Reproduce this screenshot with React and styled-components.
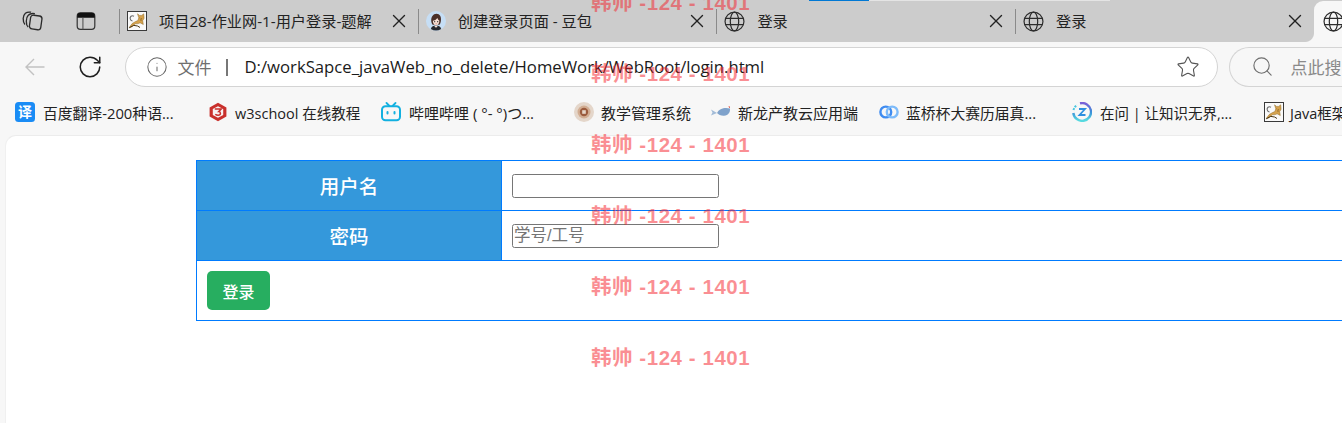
import React from "react";
import styled, { createGlobalStyle } from "styled-components";
import { RotateCw, Info, Star, Search, X } from "lucide-react";

const UI_FONT = `"Open Sans", "Noto Sans CJK SC", sans-serif`;

const Global = createGlobalStyle`
  html, body { margin: 0; padding: 0; background: #f7f7f7; }
  * { box-sizing: border-box; }
`;

const Root = styled.div`
  position: relative; width: 1342px; height: 423px; overflow: hidden;
  display: flex; flex-direction: column; background: #f7f7f7;
  font-family: ${UI_FONT}; color: #1f1f1f;
`;

const TabStrip = styled.div`
  position: relative; display: flex; height: 42px; flex: none; background: #cccccc;
`;
const StripTools = styled.div`
  width: 119px; flex: none; display: flex; align-items: center; padding-left: 21px; gap: 32px;
`;
const Tab = styled.div`
  position: relative; width: 298.7px; flex: none; display: flex; align-items: center;
  padding: 0 8px 0 8px; font-size: 15.2px;
  &::before {
    content: ""; position: absolute; left: 0; top: 9px; width: 1px; height: 25px; background: #8a8a8a;
  }
`;
const TabTitle = styled.span`
  flex: 1; margin-left: 12px; padding-bottom: 3px; white-space: nowrap; overflow: hidden; color: #222;
`;
const ActiveTab = styled.div`
  position: relative; flex: 1; display: flex; align-items: center; padding-left: 9px;
  background: #f7f7f7; border-radius: 9px 0 0 0; margin-top: 1px;
  &::before {
    content: ""; position: absolute; left: -9px; bottom: 0; width: 9px; height: 9px;
    background: radial-gradient(circle at 0 0, #cccccc 8.5px, #f7f7f7 9.5px);
  }
`;
const LoadBar = styled.div`
  position: absolute; left: 809px; top: 0; width: 301px; height: 1px; background: #e4e4e4;
  &::before { content: ""; display: block; width: 60px; height: 1px; background: #0078d4; }
`;

const Toolbar = styled.div`
  height: 46px; flex: none; display: flex; align-items: center; background: #f7f7f7; padding: 3px 0 0 25px;
`;
const NavBack = styled.div`
  width: 52px; display: flex; flex: none;
`;
const NavReload = styled.div`
  width: 48px; display: flex; flex: none; color: #1f1f1f;
`;
const AddressBar = styled.div`
  width: 1093px; height: 40px; flex: none; display: flex; align-items: center; background: #fff;
  border: 1.5px solid #d4d4d4; border-radius: 20px; padding: 0 17px 0 19.5px;
`;
const Scheme = styled.span`
  margin-left: 10px; font-size: 17px; color: #6f6f6f; width: 50px; flex: none; position: relative;
  &::after {
    content: ""; position: absolute; right: 0; top: 5px; width: 1.5px; height: 17px; background: #777;
  }
`;
const Url = styled.span`
  flex: 1; margin-left: 17px; font-size: 16.7px; color: #1a1a1a; white-space: nowrap;
`;
const SearchBox = styled.div`
  width: 140px; height: 40px; flex: none; margin-left: 11px; display: flex; align-items: center; background: #f7f7f7;
  border: 1.5px solid #d4d4d4; border-right: none; border-radius: 20px 0 0 20px; padding-left: 20.5px;
  color: #6f6f6f;
`;
const SearchHint = styled.span`
  margin-left: 17px; font-size: 17px; color: #8a8a8a; white-space: nowrap;
`;

const Bookmarks = styled.div`
  height: 47px; flex: none; display: flex; align-items: center; background: #f7f7f7; padding-left: 15px;
`;
const Bookmark = styled.div`
  width: ${p => p.$w}px; flex: none; display: flex; align-items: center; white-space: nowrap; color: #222;
`;
const BookmarkLabel = styled.span`
  margin-left: ${p => p.$gap ?? 8}px; padding-top: 1px;
  font-size: ${p => p.$size || 15}px;
`;

const Page = styled.main`
  flex: 1; margin-left: 5px; background: #fff; border-radius: 11px 0 0 0;
  border-top: 1px solid #ececec; border-left: 1px solid #f0f0f0; padding: 24px 0 0 190px;
`;
const LoginTable = styled.table`
  width: 1400px; table-layout: fixed; border-collapse: collapse;
  font-family: "Liberation Sans", "Noto Sans CJK SC", sans-serif;
  td, th { border: 1px solid #007bff; padding: 0; }
`;
const Row = styled.tr`
  height: ${p => p.$h}px;
`;
const LabelCell = styled.th`
  width: 305px; background: #3498db; color: #fff; font-size: 19.5px; font-weight: 500; text-align: center;
`;
const FieldCell = styled.td`
  padding-left: 10px !important; background: #fff;
`;
const Field = styled.input`
  display: block; width: 207px; height: 24px; border: 1px solid #767676; border-radius: 2.5px; padding: 1px;
  font-size: 16.5px; font-family: inherit; background: #fff;
  &::placeholder { color: #757575; opacity: 1; }
`;
const ActionCell = styled.td`
  padding-left: 10px !important;
`;
const LoginButton = styled.button`
  display: block; width: 63px; height: 39px; border: none; border-radius: 5px; background: #27ae60; color: #fff;
  font-size: 16px; font-weight: 500; font-family: inherit; padding: 0;
`;

const WatermarkLayer = styled.div`
  position: absolute; left: 591px; top: -9px; display: flex; flex-direction: column; gap: 47px; pointer-events: none;
`;
const Watermark = styled.div`
  height: 24px; line-height: 24px; white-space: nowrap; font-family: "Liberation Sans", "Noto Sans CJK SC", sans-serif;
  font-size: 20.5px; font-weight: 700; letter-spacing: .55px; color: rgba(245, 30, 40, .5);
`;

const Svg = ({ s = 20, children, ...r }) => (
  <svg width={s} height={s} viewBox="0 0 20 20" fill="none" style={{ flex: "none", display: "block" }} {...r}>{children}</svg>
);

const WorkspaceIcon = () => (
  <Svg s={22} stroke="#2a2a2a" strokeWidth="1.2">
    <rect x="8.2" y="5" width="10.4" height="12.6" rx="2.6" transform="rotate(8 13 11)" />
    <path d="M6.5 15.5C4.2 13.5 4.3 7 6.6 4.8c1.3-1.3 4-1.8 6-1.4" />
    <path d="M3.6 13.2C1.2 10.4 1.6 5 4 3c1.2-1 3.4-1.3 5.2-1" />
  </Svg>
);
const VerticalTabsIcon = () => (
  <Svg s={22}>
    <rect x="2" y="2.600" width="16" height="15" rx="3" stroke="#333" strokeWidth="1.1" />
    <path d="M2 5.600a3 3 0 0 1 3-3h10a3 3 0 0 1 3 3V7H2z" fill="#111" />
    <path d="M7.200 7v10.500" stroke="#555" strokeWidth="1" />
  </Svg>
);
const Tomcat = () => (
  <Svg s={20}>
    <rect x=".5" y=".5" width="19" height="19" fill="#fafafa" stroke="#3a3a3a" />
    <path d="M5.500 10C3 9.500 2.400 6.500 4 5.200c.9-.7 2-.6 3 .1" stroke="#6a6a6a" strokeWidth="1.100" />
    <path d="M10.500 2.800l2 1.600h2.200l2-1.600.4 4.400-1.400 2.500.6 3.800-3.200-1.700-1.800.8-2.900.2-4.200 3.300-1.800.2 2.800-3.800 3.400-2 2.300-1 .9-2.700z" fill="#d6a24c" stroke="#8e6a26" strokeWidth=".5" />
    <path d="M2.200 16.800l4.600-2.400 3.800.6 2.400 1.500" stroke="#4a3512" strokeWidth="1" />
    <path d="M12.700 7l.6.600M15.100 7l-.6.600M13.300 9h1.400" stroke="#5a3d10" strokeWidth=".7" />
  </Svg>
);
const Doubao = () => (
  <Svg s={20}>
    <circle cx="10" cy="10" r="10" fill="#c6def5" />
    <path d="M4.800 18c.8-2.600 2.600-3.400 5.200-3.400s4.400.8 5.200 3.400A10 10 0 0 1 4.800 18z" fill="#26262c" />
    <path d="M5.300 10.500C4.800 6 7.200 2.800 10.500 2.800c3.300 0 5 3 4.400 7.200-.3 2-.9 3.200-1.500 3.800H6.700c-.6-.7-1.200-1.700-1.400-3.300z" fill="#4a2f28" />
    <path d="M6.800 9.800c1.800-.2 3.600-1.200 4.500-2.800.6 1.300 1.300 2.200 2.100 2.800-.1 2.600-1.400 4.600-3.300 4.600s-3.200-2-3.300-4.600z" fill="#f9e1d6" />
    <path d="M8.700 15h2.600v1l-1.300.6-1.300-.6z" fill="#f9e1d6" />
    <circle cx="8.700" cy="10.700" r=".6" fill="#222" /><circle cx="11.700" cy="10.700" r=".6" fill="#222" />
    <path d="M9.500 12.800h1.400" stroke="#c5605a" strokeWidth=".6" />
  </Svg>
);
const Globe = () => (
  <Svg s={21} stroke="#2c2c2c" strokeWidth="1.15">
    <circle cx="10" cy="10" r="9" />
    <ellipse cx="10" cy="10" rx="4" ry="9" />
    <path d="M1.700 7h16.600M1.700 13h16.600" />
  </Svg>
);
const Close = () => <X size={22} strokeWidth={1.5} color="#222" style={{ flex: "none", marginBottom: 1 }} />;
const BackArrow = () => (
  <Svg s={20} stroke="#c2c2c2" strokeWidth="1.4">
    <path d="M19.500 10H1M9 2l-8 8 8 8" />
  </Svg>
);

const FanyiIcon = () => (
  <Svg s={20}>
    <rect width="20" height="20" rx="3.500" fill="#1a8cf5" />
    <text x="10" y="15" textAnchor="middle" fontSize="14" fontWeight="700" fill="#fff" fontFamily="Noto Sans CJK SC">译</text>
  </Svg>
);
const W3Icon = () => (
  <Svg s={20}>
    <path d="M10 .8l8.400 4.600v9.200L10 19.200l-8.400-4.600V5.400z" fill="#c9302c" />
    <path d="M10 4.300l5.200 2.700v6L10 15.700 4.800 13V7z" fill="#f8f2f2" />
    <path d="M6.800 7h6.400l-2.600 2.600c2.400.3 2.700 3.600-.5 3.700-1.100 0-2-.3-2.800-1" stroke="#c9302c" strokeWidth="1.500" />
  </Svg>
);
const BiliIcon = () => (
  <Svg s={20}>
    <rect x="1" y="4.200" width="18" height="14" rx="3.500" stroke="#12b0e0" strokeWidth="2" />
    <path d="M5.500 1l3 3M14.500 1l-3 3" stroke="#12b0e0" strokeWidth="1.800" strokeLinecap="round" />
    <path d="M6.500 10v1.600M13.500 10v1.600" stroke="#12b0e0" strokeWidth="2" strokeLinecap="round" />
  </Svg>
);
const SchoolIcon = () => (
  <Svg s={20}>
    <circle cx="10" cy="10" r="10" fill="#e4d6ca" />
    <circle cx="10" cy="10" r="6.500" fill="#d2ad92" />
    <circle cx="10" cy="10" r="4.200" fill="#9c5c3e" />
    <rect x="8.200" y="8.200" width="3.600" height="3.600" fill="#e7d6c8" />
  </Svg>
);
const WhaleIcon = () => (
  <Svg s={20}>
    <path d="M6 11c2-4.500 8-6 13-4.500.4 3.500-1.500 7-6 7.200-3.200.1-5.500-1-7-2.700z" fill="#7fa2cb" />
    <path d="M0 7.500l6 3.500-6 2.500 1.500-3z" fill="#a3bcd8" />
    <path d="M18 4l.6 2" stroke="#e46a5a" strokeWidth="1" />
  </Svg>
);
const LanqiaoIcon = () => (
  <Svg s={20} strokeWidth="2.400">
    <circle cx="6.800" cy="10" r="5.400" stroke="#3f8cf0" />
    <circle cx="13.200" cy="10" r="5.400" stroke="#7dbbfa" />
  </Svg>
);
const ZaiwenIcon = () => (
  <Svg s={20}>
    <path d="M8 1.300A8.900 8.900 0 1 1 1.300 11" stroke="url(#zw)" strokeWidth="2.400" />
    <path d="M1.500 8A9 9 0 0 1 5 3" stroke="#46c6e0" strokeWidth="2" strokeDasharray="2 1" />
    <path d="M7 7h6l-5.500 6h6" stroke="#2d8fe0" strokeWidth="1.800" />
    <defs>
      <linearGradient id="zw" x1="0" y1="0" x2="0" y2="1">
        <stop offset="0" stopColor="#7a5fd8" /><stop offset=".5" stopColor="#3a8fd8" /><stop offset="1" stopColor="#58dbe0" />
      </linearGradient>
    </defs>
  </Svg>
);

const bookmarks = [
  { w: 193, icon: <FanyiIcon />, label: "百度翻译-200种语...", size: 14.8 },
  { w: 173, icon: <W3Icon />, label: "w3school 在线教程", gap: 7, size: 14.5 },
  { w: 193, icon: <BiliIcon />, label: "哔哩哔哩 ( °- °)つ..." },
  { w: 137, icon: <SchoolIcon />, label: "教学管理系统", gap: 7 },
  { w: 168, icon: <WhaleIcon />, label: "新龙产教云应用端", gap: 7 },
  { w: 193, icon: <LanqiaoIcon />, label: "蓝桥杯大赛历届真...", gap: 7, size: 14.8 },
  { w: 192, icon: <ZaiwenIcon />, label: "在问 | 让知识无界,...", size: 14.5 },
  { w: 100, icon: <Tomcat />, label: "Java框架", gap: 6, size: 14.5 },
];

export default function App() {
  return (
    <Root>
      <Global />
      <TabStrip>
        <StripTools><WorkspaceIcon /><VerticalTabsIcon /></StripTools>
        <Tab><Tomcat /><TabTitle>项目28-作业网-1-用户登录-题解</TabTitle><Close /></Tab>
        <Tab><Doubao /><TabTitle>创建登录页面 - 豆包</TabTitle><Close /></Tab>
        <Tab><Globe /><TabTitle>登录</TabTitle><Close /></Tab>
        <Tab><Globe /><TabTitle>登录</TabTitle><Close /></Tab>
        <ActiveTab><Globe /></ActiveTab>
        <LoadBar />
      </TabStrip>
      <Toolbar>
        <NavBack><BackArrow /></NavBack>
        <NavReload><RotateCw size={26} strokeWidth={1.4} /></NavReload>
        <AddressBar>
          <Info size={22} strokeWidth={1.1} color="#666" style={{ flex: "none" }} />
          <Scheme>文件</Scheme>
          <Url>D:/workSapce_javaWeb_no_delete/HomeWork/WebRoot/login.html</Url>
          <Star size={24} strokeWidth={1.1} color="#555" style={{ flex: "none" }} />
        </AddressBar>
        <SearchBox>
          <Search size={23} strokeWidth={1.2} style={{ flex: "none" }} />
          <SearchHint>点此搜索</SearchHint>
        </SearchBox>
      </Toolbar>
      <Bookmarks>
        {bookmarks.map(b => (
          <Bookmark key={b.label} $w={b.w}>{b.icon}<BookmarkLabel $gap={b.gap} $size={b.size}>{b.label}</BookmarkLabel></Bookmark>
        ))}
      </Bookmarks>
      <Page>
        <LoginTable>
          <colgroup><col width="305" /><col /></colgroup>
          <tbody>
            <Row $h={50}>
              <LabelCell>用户名</LabelCell>
              <FieldCell><Field type="text" /></FieldCell>
            </Row>
            <Row $h={50}>
              <LabelCell>密码</LabelCell>
              <FieldCell><Field type="text" placeholder="学号/工号" /></FieldCell>
            </Row>
            <Row $h={60}>
              <ActionCell colSpan={2}><LoginButton>登录</LoginButton></ActionCell>
            </Row>
          </tbody>
        </LoginTable>
      </Page>
      <WatermarkLayer>
        {[0, 1, 2, 3, 4, 5].map(i => <Watermark key={i}>韩帅 -124 - 1401</Watermark>)}
      </WatermarkLayer>
    </Root>
  );
}
